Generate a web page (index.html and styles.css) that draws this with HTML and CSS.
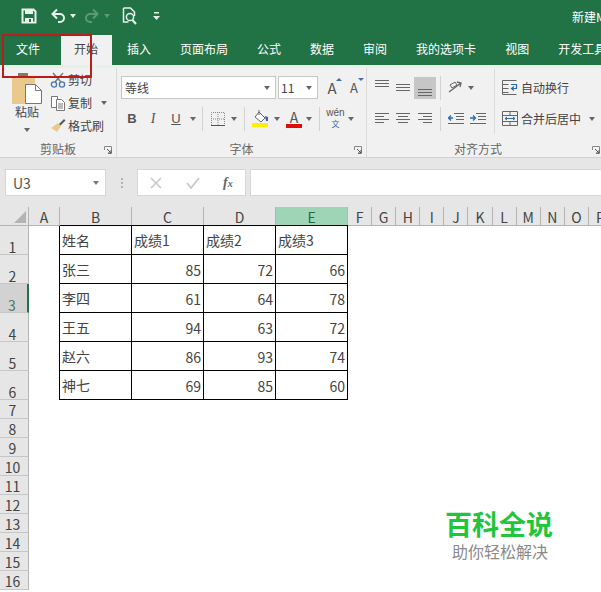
FILE: index.html
```html
<!DOCTYPE html>
<html lang="zh">
<head>
<meta charset="utf-8">
<title>Excel</title>
<link rel="stylesheet" href="styles.css">
</head>
<body>
<div class="app">
  <header class="titlebar">
    <svg class="qa qa-save" width="16" height="16" viewBox="0 0 16 16"><path d="M1.500 1.500h11l2 2v11h-13z" fill="none" stroke="#e8f2ec" stroke-width="2"/><rect x="4" y="2" width="8" height="4" fill="#e8f2ec"/><rect x="4" y="10" width="8" height="4" fill="#e8f2ec"/><rect x="8" y="11" width="2" height="3" fill="#217346"/></svg>
    <svg class="qa qa-undo" width="16" height="16" viewBox="0 0 16 16"><path d="M3 6h7a4 4 0 0 1 0 8H8" fill="none" stroke="#e8f2ec" stroke-width="2"/><path d="M7 1.500 2.500 6 7 10.500" fill="none" stroke="#e8f2ec" stroke-width="2"/></svg>
    <span class="caret caret-light qa-undo-caret"></span>
    <svg class="qa qa-redo" width="16" height="16" viewBox="0 0 16 16"><path d="M13 6H6a4 4 0 0 0 0 8h2" fill="none" stroke="#5c9a78" stroke-width="2"/><path d="M9 1.500 13.500 6 9 10.500" fill="none" stroke="#5c9a78" stroke-width="2"/></svg>
    <span class="caret caret-dim qa-redo-caret"></span>
    <svg class="qa qa-preview" width="16" height="18" viewBox="0 0 16 18"><path d="M1.500 1h7l4 4v4M1.500 1v14h5" fill="none" stroke="#e8f2ec" stroke-width="1.500"/><circle cx="8" cy="10" r="3.600" fill="none" stroke="#e8f2ec" stroke-width="1.500"/><path d="m10.500 13 3.500 4" stroke="#e8f2ec" stroke-width="2"/></svg>
    <svg class="qa qa-more" width="7" height="9" viewBox="0 0 7 9"><rect x="1" y="0" width="5" height="1.500" fill="#e8f2ec"/><path d="M0 4h7L3.500 8z" fill="#e8f2ec"/></svg>
    <span class="doc-title">新建Microsoft Excel 工作表</span>
  </header>

  <nav class="tabs">
    <span class="tab tab-file">文件</span>
    <span class="tab tab-active">开始</span>
    <span class="tab">插入</span>
    <span class="tab">页面布局</span>
    <span class="tab">公式</span>
    <span class="tab">数据</span>
    <span class="tab">审阅</span>
    <span class="tab">我的选项卡</span>
    <span class="tab">视图</span>
    <span class="tab">开发工具</span>
  </nav>

  <section class="ribbon">
    <div class="group g-clip">
      <div class="group-body clip-body">
        <div class="paste">
          <svg width="32" height="31" viewBox="0 0 32 31"><rect x="1" y="3" width="23" height="28" fill="#eac98c"/><rect x="7" y="0" width="10" height="5" fill="#8a7a5c"/><path d="M14.500 11.500h10l6 6v13h-16z" fill="#fff" stroke="#777"/><path d="M24.500 11.500v6h6" fill="none" stroke="#777"/></svg>
          <span class="paste-label">粘贴</span>
          <span class="caret"></span>
        </div>
        <div class="clip-list">
          <div class="clip-row">
            <svg width="16" height="16" viewBox="0 0 16 16"><path d="m3 1 8 9M13 1l-8 9" stroke="#777" stroke-width="1.400"/><circle cx="4" cy="12.500" r="2.600" fill="none" stroke="#4a78b0" stroke-width="1.400"/><circle cx="12" cy="12.500" r="2.600" fill="none" stroke="#4a78b0" stroke-width="1.400"/></svg>
            <span>剪切</span>
          </div>
          <div class="clip-row">
            <svg width="16" height="16" viewBox="0 0 16 16"><path d="M1.500 1.500h6v11h-6z" fill="#fff" stroke="#777"/><path d="M6.500 4.500h5l3 3v8h-8z" fill="#fff" stroke="#777"/><path d="M8 9h5M8 11h5M8 13h5" stroke="#777"/></svg>
            <span>复制</span>
            <span class="caret caret-copy"></span>
          </div>
          <div class="clip-row">
            <svg width="16" height="16" viewBox="0 0 16 16"><path d="m8 5 3 3-4 6-6-4z" fill="#eac98c"/><path d="m9 6 5-5 1.500 1.500-5 5z" fill="#5a5a5a"/></svg>
            <span>格式刷</span>
          </div>
        </div>
      </div>
      <div class="group-label">剪贴板<svg class="launcher" width="8" height="8" viewBox="0 0 8 8"><path d="M.5 4V.5H7.500V7.500H4" fill="none" stroke="#888"/><path d="m3 3 4 4M7 4v3H4" fill="none" stroke="#555"/></svg></div>
    </div>

    <div class="group g-font">
      <div class="group-body">
        <div class="row row-top font-top">
          <div class="combo combo-name"><span>等线</span><span class="caret"></span></div>
          <div class="combo combo-size"><span>11</span><span class="caret"></span></div>
          <span class="grow">A<i class="tri tri-up"></i></span>
          <span class="shrink">A<i class="tri tri-down"></i></span>
        </div>
        <div class="row row-bottom font-bottom">
          <b class="fmt fmt-b">B</b>
          <i class="fmt fmt-i">I</i>
          <u class="fmt fmt-u">U</u>
          <span class="caret c-u"></span>
          <span class="sep s-1"></span>
          <svg class="ic-border" width="14" height="14" viewBox="0 0 14 14"><path d="M.5.500h13v13H.5zM7 .5v13M.5 7h13" fill="none" stroke="#888" stroke-dasharray="1 1" stroke-dashoffset=".5"/><path d="M0 13.500h14" stroke="#555"/></svg>
          <span class="caret c-border"></span>
          <span class="sep s-2"></span>
          <svg class="ic-fill" width="17" height="17" viewBox="0 0 17 17"><path d="m7 2 6 6-4 4-6-5z" fill="#fff" stroke="#666"/><path d="M7 0v5" stroke="#666"/><path d="m13 6 3 1v4h-2z" fill="#3f5fa8"/><rect y="13" width="16" height="4" fill="#ffee00"/></svg>
          <span class="caret c-fill"></span>
          <div class="ic-color">A<span class="color-bar"></span></div>
          <span class="caret c-color"></span>
          <span class="sep s-3"></span>
          <div class="ic-wen"><span class="wen-top">wén</span><span class="wen-bottom">文</span></div>
          <span class="caret c-wen"></span>
        </div>
      </div>
      <div class="group-label">字体<svg class="launcher" width="8" height="8" viewBox="0 0 8 8"><path d="M.5 4V.5H7.500V7.500H4" fill="none" stroke="#888"/><path d="m3 3 4 4M7 4v3H4" fill="none" stroke="#555"/></svg></div>
    </div>

    <div class="group g-align">
      <div class="group-body align-body">
        <div class="align-left">
          <div class="row row-top">
            <svg class="al al-1 al-raised" width="14" height="12" viewBox="0 0 14 12"><path d="M0 .5h14M0 3.500h14M0 6.500h14" stroke="#666"/></svg>
            <svg class="al al-2" width="14" height="12" viewBox="0 0 14 12"><path d="M0 2.500h14M0 5.500h14M0 8.500h14" stroke="#666"/></svg>
            <span class="al-active"><svg width="14" height="12" viewBox="0 0 14 12"><path d="M0 5.500h14M0 8.500h14M0 11.500h14" stroke="#666"/></svg></span>
            <span class="sep s-4"></span>
            <svg class="ic-orient" width="15" height="15" viewBox="0 0 15 15"><path d="m1 12 12-9M9 2l4 1-1 4" fill="none" stroke="#666" stroke-width="1.300"/><path d="m2 5 5-3 2 3-5 3z" fill="none" stroke="#666"/></svg>
            <span class="caret c-orient"></span>
          </div>
          <div class="row row-bottom">
            <svg class="al al-1" width="14" height="12" viewBox="0 0 14 12"><path d="M0 .5h14M0 3.500h9M0 6.500h14M0 9.500h9" stroke="#666"/></svg>
            <svg class="al al-2" width="14" height="12" viewBox="0 0 14 12"><path d="M0 .5h14M2 3.500h10M0 6.500h14M2 9.500h10" stroke="#666"/></svg>
            <svg class="al al-3" width="14" height="12" viewBox="0 0 14 12"><path d="M0 .5h14M5 3.500h9M0 6.500h14M5 9.500h9" stroke="#666"/></svg>
            <span class="sep s-5"></span>
            <svg class="ic-indent" width="16" height="12" viewBox="0 0 16 12"><path d="M6 .5h10M8 3.500h8M8 6.500h8M0 10.500h16" stroke="#666"/><path d="M0 5h5M3 2.500 .5 5 3 7.500" fill="none" stroke="#2b6cb0" stroke-width="1.300"/></svg>
            <svg class="ic-indent2" width="16" height="12" viewBox="0 0 16 12"><path d="M6 .5h10M8 3.500h8M8 6.500h8M0 10.500h16" stroke="#666"/><path d="M0 5h5M3 2.500 5.500 5 3 7.500" fill="none" stroke="#2b6cb0" stroke-width="1.300"/></svg>
          </div>
        </div>
        <span class="group-divider"></span>
        <div class="align-right">
          <div class="row row-top">
            <svg width="16" height="15" viewBox="0 0 16 15"><path d="M.5.500h14M.5 4.500h6M.5 8.500h6M.5 12.500h6M.5.500v14h14" fill="none" stroke="#666"/><path d="M9 4.500h5.500v4H10" fill="none" stroke="#2b6cb0" stroke-width="1.200"/><path d="m12 6.500-2.500 2 2.500 2" fill="none" stroke="#2b6cb0" stroke-width="1.200"/></svg>
            <span class="wrap-label">自动换行</span>
          </div>
          <div class="row row-bottom">
            <svg width="16" height="15" viewBox="0 0 16 15"><path d="M.5.500h15v14H.5zM.5 4.500h15M.5 10.500h15M8 .5v4M8 10.500v4" fill="none" stroke="#666"/><path d="M3 7.500h10M5 6l-2 1.500L5 9M11 6l2 1.500L11 9" fill="none" stroke="#2b6cb0"/></svg>
            <span class="wrap-label">合并后居中</span>
            <span class="caret c-merge"></span>
          </div>
        </div>
      </div>
      <div class="group-label label-align">对齐方式<svg class="launcher" width="8" height="8" viewBox="0 0 8 8"><path d="M.5 4V.5H7.500V7.500H4" fill="none" stroke="#888"/><path d="m3 3 4 4M7 4v3H4" fill="none" stroke="#555"/></svg></div>
    </div>
  </section>

  <section class="formula">
    <div class="namebox"><span>U3</span><span class="caret"></span></div>
    <div class="dots"><i></i><i></i><i></i></div>
    <div class="fx-box">
      <svg width="12" height="12" viewBox="0 0 12 12"><path d="m1 1 10 10M11 1 1 11" stroke="#c8c8c8" stroke-width="1.600"/></svg>
      <svg width="14" height="12" viewBox="0 0 14 12"><path d="m1 6 4 5 8-10" fill="none" stroke="#c8c8c8" stroke-width="1.800"/></svg>
      <span class="fx">f<small>x</small></span>
    </div>
    <div class="input"></div>
  </section>

  <section class="sheet">
    <div class="corner"><svg width="12" height="12" viewBox="0 0 12 12"><path d="M12 0v12H0z" fill="#b4b4b4"/></svg></div>
    <div class="ch">A</div><div class="ch">B</div><div class="ch">C</div><div class="ch">D</div><div class="ch ch-sel">E</div>
    <div class="ch">F</div><div class="ch">G</div><div class="ch">H</div><div class="ch">I</div><div class="ch">J</div><div class="ch">K</div><div class="ch">L</div><div class="ch">M</div><div class="ch">N</div><div class="ch">O</div><div class="ch">P</div>

    <div class="rh r-tall">1</div><div class="blank"></div><div class="c">姓名</div><div class="c">成绩1</div><div class="c">成绩2</div><div class="c">成绩3</div><div class="rest"></div>
    <div class="rh r-tall">2</div><div class="blank"></div><div class="c">张三</div><div class="c n">85</div><div class="c n">72</div><div class="c n">66</div><div class="rest"></div>
    <div class="rh r-tall rh-sel">3</div><div class="blank"></div><div class="c">李四</div><div class="c n">61</div><div class="c n">64</div><div class="c n">78</div><div class="rest"></div>
    <div class="rh r-tall">4</div><div class="blank"></div><div class="c">王五</div><div class="c n">94</div><div class="c n">63</div><div class="c n">72</div><div class="rest"></div>
    <div class="rh r-tall">5</div><div class="blank"></div><div class="c">赵六</div><div class="c n">86</div><div class="c n">93</div><div class="c n">74</div><div class="rest"></div>
    <div class="rh r-tall">6</div><div class="blank"></div><div class="c">神七</div><div class="c n">69</div><div class="c n">85</div><div class="c n">60</div><div class="rest"></div>
    <div class="rh">7</div><div class="empty"></div>
    <div class="rh">8</div><div class="empty"></div>
    <div class="rh">9</div><div class="empty"></div>
    <div class="rh">10</div><div class="empty"></div>
    <div class="rh">11</div><div class="empty"></div>
    <div class="rh">12</div><div class="empty"></div>
    <div class="rh">13</div><div class="empty"></div>
    <div class="rh">14</div><div class="empty"></div>
    <div class="rh">15</div><div class="empty"></div>
    <div class="rh">16</div><div class="empty"></div>
  </section>

  <div class="highlight"></div>
  <div class="watermark">
    <div class="wm-title">百科全说</div>
    <div class="wm-sub">助你轻松解决</div>
  </div>
</div>
</body>
</html>
```
FILE: styles.css
```css
* { box-sizing: border-box; }
html, body { margin: 0; padding: 0; }
body {
  width: 601px;
  height: 592px;
  overflow: hidden;
  background: #fff;
  font-family: "Noto Sans CJK SC", "Liberation Sans", sans-serif;
  color: #444;
}
.app { position: relative; width: 601px; height: 592px; overflow: hidden; }

/* title bar */
.titlebar {
  height: 35px;
  background: #217346;
  display: flex;
  align-items: center;
  padding-bottom: 3px;
  white-space: nowrap;
}
.qa { flex: none; }
.qa-save { margin-left: 21px; }
.qa-undo { margin-left: 13px; }
.qa-undo-caret { margin-left: 4px; }
.qa-redo { margin-left: 8px; }
.qa-redo-caret { margin-left: 4px; }
.qa-preview { margin-left: 12px; }
.qa-more { margin-left: 15px; }
.doc-title { margin-left: 412px; color: #fff; font-size: 12px; flex: none; }

.caret {
  display: inline-block;
  flex: none;
  width: 0;
  height: 0;
  border-left: 3.5px solid transparent;
  border-right: 3.5px solid transparent;
  border-top: 4px solid #666;
}
.caret-light { border-top-color: #e8f2ec; }
.caret-dim { border-top-color: #5c9a78; }

/* tabs */
.tabs {
  height: 30px;
  background: #217346;
  display: flex;
  padding-left: 1.500px;
  white-space: nowrap;
  font-size: 12px;
  color: #fff;
}
.tab {
  flex: none;
  padding: 0 14.5px;
  line-height: 27px;
}
.tab-active { background: #f1f1f1; color: #444; padding: 0 14px 0 13px; margin-left: 1px; }
.tab-file { padding: 0 20px 0 14.5px; }
.tab-active + .tab { padding-left: 15px; }

/* ribbon */
.ribbon {
  height: 93px;
  background: #f1f1f1;
  border-top: 3px solid #e6f1ea;
  border-bottom: 1px solid #d2d2d2;
  display: flex;
  font-size: 12px;
  color: #444;
}
.group {
  flex: none;
  position: relative;
  display: flex;
  flex-direction: column;
  border-right: 1px solid #dadada;
}
.g-clip { width: 117px; }
.g-font { width: 250px; }
.g-align { width: 234px; border-right: 0; }
.group-body { height: 73px; }
.group-label {
  position: relative;
  flex: 1;
  padding-top: 1px;
  text-align: center;
  font-size: 12px;
  color: #666;
  line-height: 14px;
}
.label-align { padding-right: 12px; }
.launcher { position: absolute; right: 4px; top: 5px; }
.g-align .launcher { right: 1px; }

.clip-body { display: flex; }
.paste {
  margin-left: 11px;
  width: 32px;
  padding-top: 5px;
  display: flex;
  flex-direction: column;
  align-items: center;
}
.paste-label { line-height: 17px; margin-top: -1px; }
.paste .caret { margin-top: 8px; }
.clip-list { margin-left: 7px; }
.clip-row {
  display: flex;
  align-items: center;
  height: 23px;
  gap: 2px;
  white-space: nowrap;
}
.caret-copy { margin-left: 7px; }

.row { display: flex; align-items: center; }
.row-top { height: 29px; padding-top: 10px; }
.row-bottom { height: 31px; margin-top: 5px; padding-top: 2px; }

.font-top { padding-left: 4px; }
.combo {
  height: 23px;
  background: #fff;
  border: 1px solid #c6c6c6;
  display: flex;
  align-items: center;
  justify-content: space-between;
  padding: 0 5px 0 3px;
  font-size: 12px;
}
.combo-name { width: 155px; }
.combo-size { width: 40px; margin-left: 2px; padding-left: 2px; }
.grow, .shrink {
  position: relative;
  font-size: 15px;
  width: 14px;
  text-align: center;
  line-height: 20px;
  color: #555;
}
.shrink { font-size: 13px; }
.grow { margin-left: 7px; }
.shrink { margin-left: 8px; }
.tri {
  position: absolute;
  top: 0;
  right: -3px;
  width: 0;
  height: 0;
  border-left: 3px solid transparent;
  border-right: 3px solid transparent;
}
.tri-up { border-bottom: 3px solid #3f6fa8; }
.tri-down { border-top: 3px solid #3f6fa8; }

.font-bottom { padding-left: 10px; }
.fmt { font-family: "Liberation Sans", sans-serif; font-size: 13px; width: 10px; text-align: center; color: #555; }
.fmt-i { margin-left: 11px; font-family: "Liberation Serif", serif; font-size: 14px; }
.fmt-u { margin-left: 13px; }
.c-u { margin-left: 9px; }
.sep { flex: none; width: 1px; height: 24px; background: #d2d2d2; }
.s-1 { margin-left: 6px; }
.ic-border { margin-left: 8px; }
.c-border { margin-left: 6px; }
.s-2 { margin-left: 7px; }
.ic-fill { margin-left: 7px; }
.c-fill { margin-left: 5px; }
.ic-color {
  width: 16px;
  margin-left: 6px;
  font-size: 14px;
  line-height: 14px;
  text-align: center;
  color: #555;
  display: flex;
  flex-direction: column;
}
.color-bar { height: 4px; background: #e00c0c; }
.c-color { margin-left: 4px; }
.s-3 { margin-left: 7px; }
.ic-wen { width: 17px; margin-left: 7px; display: flex; flex-direction: column; align-items: center; color: #555; }
.wen-top { font-family: "Liberation Sans", sans-serif; font-size: 10px; line-height: 11px; }
.wen-bottom { font-size: 8px; line-height: 12px; color: #2b6cb0; }
.c-wen { margin-left: 4px; }

.align-body { display: flex; }
.align-left { width: 127px; padding-left: 8px; }
.al-raised { margin-bottom: 4px; }
.al-2 { margin-left: 7px; }
.al-3 { margin-left: 8px; }
.al-active {
  width: 22px;
  height: 22px;
  margin-left: 4px;
  background: #c6c6c6;
  display: flex;
  align-items: center;
  justify-content: center;
  padding-top: 4px;
}
.s-4 { margin-left: 4px; }
.ic-orient { margin-left: 7px; }
.c-orient { margin-left: 5px; }
.row-bottom .s-5 { margin-left: 8px; }
.ic-indent { margin-left: 7px; }
.ic-indent2 { margin-left: 6px; }
.group-divider { flex: none; width: 1px; height: 65px; margin-top: 1px; background: #dadada; }
.align-right { padding-left: 7px; }
.wrap-label { margin-left: 3px; white-space: nowrap; }
.c-merge { margin-left: 8px; }

/* formula bar */
.formula {
  height: 49px;
  background: #e6e6e6;
  display: flex;
  padding: 11px 0 11px 5px;
}
.namebox, .fx-box, .input { flex: none; background: #fff; border: 1px solid #d6d6d6; height: 27px; }
.namebox {
  width: 101px;
  display: flex;
  align-items: center;
  justify-content: space-between;
  padding: 0 6px 0 7px;
  font-size: 14px;
  color: #555;
}
.namebox .caret { border-top-color: #777; }
.dots {
  flex: none;
  width: 31px;
  display: flex;
  flex-direction: column;
  align-items: center;
  justify-content: center;
  gap: 2px;
}
.dots i { width: 2px; height: 2px; background: #b4b4b4; }
.fx-box {
  width: 109px;
  display: flex;
  align-items: center;
  padding-left: 12px;
  gap: 24px;
}
.fx {
  font-family: "Liberation Serif", serif;
  font-style: italic;
  font-weight: bold;
  font-size: 14px;
  color: #666;
  margin-left: -1px;
}
.fx small { font-size: 10px; }
.input { width: 360px; margin-left: 4px; }

/* sheet */
.sheet {
  display: grid;
  grid-template-columns: 29px 31px repeat(4, 72px) repeat(11, 24.1px);
  grid-template-rows: 19px repeat(6, 29px) repeat(11, 19px);
  font-size: 14px;
  color: #444;
}
.corner {
  background: #e6e6e6;
  border-right: 1px solid #b4b4b4;
  border-bottom: 1px solid #b4b4b4;
  display: flex;
  align-items: flex-end;
  justify-content: flex-end;
  padding: 0 2px 2px 0;
}
.ch {
  background: #e6e6e6;
  border-right: 1px solid #b4b4b4;
  border-bottom: 1px solid #b4b4b4;
  text-align: center;
  line-height: 20px;
  font-size: 14px;
  white-space: nowrap;
  overflow: hidden;
}
.ch-sel { background: #9fd5b7; color: #1e6b41; border-bottom-color: #217346; }
.rh {
  grid-column: 1;
  background: #e6e6e6;
  border-right: 1px solid #b4b4b4;
  border-bottom: 1px solid #c6c6c6;
  text-align: center;
  padding-right: 3px;
  font-size: 14px;
  line-height: 20px;
  color: #444;
}
.r-tall { line-height: 17px; padding-top: 13px; }
.rh-sel { background: #d2d2d2; border-right: 2px solid #217346; color: #4d7a62; }
.blank { grid-column: 2; }
.rest { grid-column: 7 / -1; }
.empty { grid-column: 2 / -1; }
.c {
  border-right: 1px solid #000;
  border-bottom: 1px solid #000;
  box-shadow: -1px 0 0 #000, 0 -1px 0 #000;
  padding: 4px 2px 0 2px;
  font-size: 14px;
  line-height: 20px;
  color: #444;
  white-space: nowrap;
}
.n { text-align: right; padding: 5px 2px 0 0; }

/* overlays */
.highlight {
  position: absolute;
  left: 2px;
  top: 34px;
  width: 90px;
  height: 44px;
  border: 2px solid #bd1c1c;
  pointer-events: none;
}
.watermark {
  position: absolute;
  left: 445px;
  top: 507px;
  width: 132px;
  height: 61px;
  background: #fff;
}
.wm-title {
  font-size: 27px;
  line-height: 34px;
  font-weight: 700;
  color: #1fc63b;
  white-space: nowrap;
}
.wm-sub {
  font-size: 16px;
  line-height: 20px;
  margin-left: 7px;
  color: #8a8a8a;
  white-space: nowrap;
}
```
